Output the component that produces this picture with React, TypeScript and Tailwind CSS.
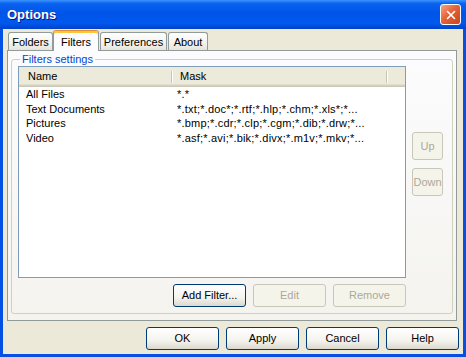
import { X } from 'lucide-react';

const filters = [
  { name: 'All Files', mask: '*.*' },
  { name: 'Text Documents', mask: '*.txt;*.doc*;*.rtf;*.hlp;*.chm;*.xls*;*...' },
  { name: 'Pictures', mask: '*.bmp;*.cdr;*.clp;*.cgm;*.dib;*.drw;*...' },
  { name: 'Video', mask: '*.asf;*.avi;*.bik;*.divx;*.m1v;*.mkv;*...' },
];

function XpButton({
  label,
  disabled,
  className = '',
}: {
  label: string;
  disabled?: boolean;
  className?: string;
}) {
  const look = disabled
    ? 'border-[#C9C7BA] bg-[#F5F4EA] text-[#ACA899]'
    : 'border-[#003C74] bg-[linear-gradient(180deg,#FFFFFF_0%,#F4F3EE_60%,#DCD8CD_100%)] text-black';
  return (
    <div
      className={`flex items-center justify-center rounded-[3px] border ${look} ${className}`}>
      {label}
    </div>
  );
}

function Tab({
  label,
  width,
  active,
}: {
  label: string;
  width: string;
  active?: boolean;
}) {
  if (active) {
    return (
      <div
        className={`relative z-10 -mb-px flex h-[21px] ${width} items-start justify-center rounded-t-[3px] border-x border-t border-x-[#919B9C] border-t-[#E68B2C] bg-[#FCFCFE] pt-[3px] shadow-[inset_0_2px_0_#FFC83C]`}>
        {label}
      </div>
    );
  }
  return (
    <div
      className={`flex h-[18px] ${width} items-center justify-center rounded-t-[3px] border-x border-t border-[#919B9C] bg-[linear-gradient(180deg,#FFFFFF_0%,#F3F2EC_60%,#E6E4DA_100%)] pt-px`}>
      {label}
    </div>
  );
}

export default function App() {
  return (
    <div className="flex h-[357px] w-[466px] flex-col bg-[#0450E4] font-['Liberation_Sans',Arial,sans-serif] text-[11px] text-black">
      {/* Title bar */}
      <div className="flex h-[29px] shrink-0 items-center justify-between bg-[linear-gradient(180deg,#3D95FF_0%,#0A62F0_12%,#0055E8_45%,#0058EE_80%,#0042C6_100%)] pl-[7px] pr-[5px]">
        <span className="text-[13px] font-bold text-white [text-shadow:1px_1px_0_#0A1883]">
          Options
        </span>
        <div className="flex h-[21px] w-[21px] items-center justify-center rounded-[3px] border border-white bg-[linear-gradient(135deg,#F3A488_0%,#E5633A_45%,#C8441A_100%)]">
          <X className="h-[14px] w-[14px] text-white" strokeWidth={2.75} />
        </div>
      </div>

      {/* Client area */}
      <div className="mx-[3px] mb-[3px] flex flex-1 flex-col bg-[#ECE9D8]">
        {/* Tabs */}
        <div className="ml-[5px] mt-px flex h-[20px] items-end">
          <Tab label="Folders" width="w-[45px]" />
          <Tab label="Filters" width="w-[46px]" active />
          <div className="w-px" />
          <Tab label="Preferences" width="w-[67px]" />
          <div className="w-px" />
          <Tab label="About" width="w-[40px]" />
        </div>

        {/* Tab panel */}
        <div className="ml-[4px] h-[271px] w-[450px] border border-[#919B9C] bg-[linear-gradient(180deg,#FCFCFE_0%,#F4F3EE_100%)]">
          <fieldset className="mx-[3px] mt-[2px] rounded-[3px] border border-[#D0D0BF] pb-[6px] pl-[6px] pr-[7px]">
            <legend className="ml-[2px] px-[2px] leading-[13px] text-[#0046D5]">
              Filters settings
            </legend>
            <div className="flex">
              <div className="flex w-[388px] flex-col">
                {/* List view */}
                <div className="h-[212px] border border-[#7F9DB9] bg-white">
                  <div className="flex h-[20px] bg-[#EBEADB] shadow-[inset_0_-1px_0_#CBC7B8,inset_0_-2px_0_#D6D2C2,inset_0_-3px_0_#E2DECD]">
                    <div className="flex w-[152px] items-center pb-[2px] pl-[9px]">Name</div>
                    <div className="my-[4px] w-px bg-[#C7C5B2] shadow-[1px_0_0_#FFFFFF]" />
                    <div className="flex w-[214px] items-center pb-[2px] pl-[8px]">Mask</div>
                    <div className="my-[4px] w-px bg-[#C7C5B2] shadow-[1px_0_0_#FFFFFF]" />
                  </div>
                  {filters.map(f => (
                    <div key={f.name} className="flex h-[14.5px] items-center">
                      <div className="w-[152px] pl-[7px]">{f.name}</div>
                      <div className="pl-[6px] tracking-[0.2px]">{f.mask}</div>
                    </div>
                  ))}
                </div>
                <div className="mt-[6px] flex justify-end gap-[7px]">
                  <XpButton label="Add Filter..." className="h-[23px] w-[73px]" />
                  <XpButton label="Edit" disabled className="h-[23px] w-[73px]" />
                  <XpButton label="Remove" disabled className="h-[23px] w-[73px]" />
                </div>
              </div>
              <div className="ml-[6px] mt-[66px] flex flex-col gap-[8px]">
                <XpButton label="Up" disabled className="h-[28px] w-[31px]" />
                <XpButton label="Down" disabled className="h-[28px] w-[31px]" />
              </div>
            </div>
          </fieldset>
        </div>

        {/* Dialog buttons */}
        <div className="mr-[4px] mt-[6px] flex justify-end gap-[7px]">
          <XpButton label="OK" className="h-[23px] w-[73px]" />
          <XpButton label="Apply" className="h-[23px] w-[73px]" />
          <XpButton label="Cancel" className="h-[23px] w-[73px]" />
          <XpButton label="Help" className="h-[23px] w-[73px]" />
        </div>
      </div>
    </div>
  );
}
